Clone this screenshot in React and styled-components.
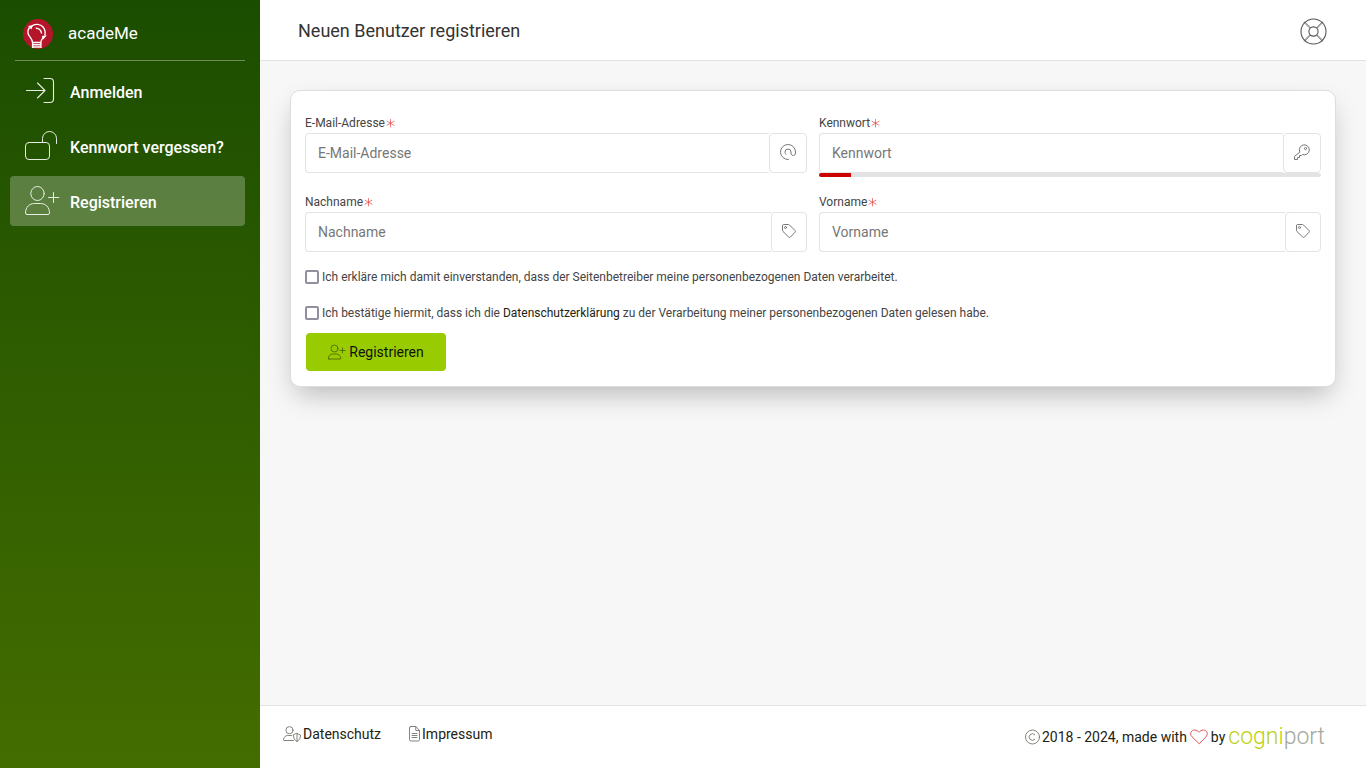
import React from "react";
import styled, { createGlobalStyle } from "styled-components";

const GlobalStyle = createGlobalStyle`
  * {
    box-sizing: border-box;
  }
  body {
    margin: 0;
    background: #f7f7f7;
    color: #444444;
    font-family: Roboto, "Liberation Sans", sans-serif;
    font-size: 14px;
    line-height: 20px;
  }
  button, input {
    font-family: inherit;
  }
  a {
    color: #222211;
    text-decoration: none;
  }
`;

const Page = styled.div`
  display: flex;
  min-height: 100vh;
`;

const Sidebar = styled.aside`
  flex: 0 0 260px;
  background: linear-gradient(#1b4d00, #446d00);
`;

const Brand = styled.a`
  display: flex;
  align-items: center;
  gap: 15px;
  height: 61px;
  margin: 0 15px 5px;
  padding: 8px 8px 0;
  border-bottom: 1px solid rgba(255, 255, 255, 0.35);
  color: #ffffff;
  font-size: 17px;
`;

const BrandName = styled.span`
  padding-bottom: 2px;
`;

const NavList = styled.nav`
  display: flex;
  flex-direction: column;
  gap: 5px;
  padding: 0 15px 0 10px;
`;

const NavItem = styled.a`
  display: flex;
  align-items: center;
  gap: 9px;
  height: 50px;
  padding: 4px 15px 0;
  border-radius: 4px;
  background: ${(props) =>
    props.$active ? "rgba(255, 255, 255, 0.25)" : "transparent"};
  color: #ffffff;
  font-size: 16px;
  font-weight: 500;
  white-space: nowrap;

  svg {
    margin-bottom: 4px;
  }
`;

const Main = styled.div`
  flex: 1;
  min-width: 0;
  display: flex;
  flex-direction: column;
`;

const Header = styled.header`
  display: flex;
  align-items: center;
  justify-content: space-between;
  height: 61px;
  padding: 2px 39px 0 38px;
  background: #ffffff;
  border-bottom: 1px solid #e3e3e3;
`;

const Title = styled.h1`
  margin: 0;
  color: #333333;
  font-size: 18px;
  font-weight: 400;
`;

const HelpButton = styled.button`
  display: flex;
  padding: 0;
  border: 0;
  background: none;
  color: #555555;
`;

const Content = styled.main`
  flex: 1;
  padding: 29px 30px;
`;

const Card = styled.form`
  padding: 22px 14px 15px;
  border: 1px solid #dddddd;
  border-radius: 10px;
  background: #ffffff;
  box-shadow: 0 12px 28px -6px rgba(0, 0, 0, 0.27);
`;

const Fields = styled.div`
  display: grid;
  grid-template-columns: 1fr 1fr;
  gap: 15px 12px;
`;

const Label = styled.label`
  display: flex;
  align-items: center;
  gap: 1px;
  font-size: 12px;
  line-height: 20px;
`;

const InputGroup = styled.div`
  display: flex;
  height: 40px;
`;

const TextInput = styled.input`
  flex: 1;
  min-width: 0;
  padding: 0 12px;
  border: 1px solid #e3e3e3;
  border-right: 0;
  border-radius: 4px 0 0 4px;
  background: #ffffff;
  color: #444444;
  font-size: 14px;
  outline: none;

  &::placeholder {
    color: #777777;
    opacity: 1;
  }
`;

const Addon = styled.span`
  display: flex;
  align-items: center;
  padding: 0 10px 2px;
  border: 1px solid #e3e3e3;
  border-radius: 4px;
  color: #777777;
`;

const Strength = styled.div`
  height: 4px;
  overflow: hidden;
  border-radius: 2px;
  background: #e3e3e3;
`;

const StrengthBar = styled.div`
  height: 100%;
  background: #cc0000;
`;

const Checks = styled.div`
  display: flex;
  flex-direction: column;
  gap: 16px;
  margin: 15px 0 10px;
`;

const CheckRow = styled.div`
  display: flex;
  align-items: center;
  gap: 3px;
  font-size: 12px;
`;

const Checkbox = styled.input`
  flex: none;
  appearance: none;
  width: 14px;
  height: 14px;
  margin: 0;
  border: 2px solid #8f8f9d;
  border-radius: 2px;
  background: #ffffff;

  &:checked {
    background: #99cc00;
  }
`;

const SubmitButton = styled.button`
  display: flex;
  align-items: center;
  justify-content: center;
  gap: 3px;
  min-width: 140px;
  height: 38px;
  margin-left: 1px;
  padding: 0 22px;
  border: 0;
  border-radius: 4px;
  background: #99cc00;
  color: #111111;
  font-size: 14px;
`;

const Footer = styled.footer`
  display: flex;
  align-items: center;
  justify-content: space-between;
  height: 63px;
  padding: 0 41px 0 23px;
  border-top: 1px solid #e3e3e3;
  background: #ffffff;
  color: #222211;
`;

const FooterLinks = styled.div`
  display: flex;
  gap: 28px;
  padding-bottom: 6px;
`;

const FooterLink = styled.a`
  display: flex;
  align-items: center;
  gap: 2px;
`;

const Copyright = styled.div`
  display: flex;
  align-items: center;
  gap: 3px;
`;

const Year = styled.span`
  display: flex;
  align-items: center;
  gap: 2px;
`;

const Cogniport = styled.a`
  color: #bdd010;
  font-size: 23px;
  font-weight: 300;
  line-height: 24px;
`;

const Port = styled.span`
  color: #a3a89a;
`;

const Icon = ({ w, h, stroke = 1, color = "currentColor", children }) => (
  <svg
    width={w}
    height={h}
    viewBox={`0 0 ${w} ${h}`}
    fill="none"
    stroke={color}
    strokeWidth={stroke}
    strokeLinecap="round"
    strokeLinejoin="round"
    aria-hidden="true"
  >
    {children}
  </svg>
);

const Logo = () => (
  <svg width="30" height="30" viewBox="0 0 30 30" fill="none" aria-hidden="true">
    <circle cx="15" cy="15" r="15" fill="#b5152b" />
    <g stroke="#ffffff" strokeWidth="1.4">
      <path d="M6.5 8.5C4.6 11 4.5 14 6 16.5C7.5 19 9.3 20.5 9.6 23.5H17.8C18 21 19.3 19.7 20.5 18" />
      <path d="M8.5 7.2C12 4.2 17.5 5 20.3 8.3C22.3 11 22.6 13.5 21.8 16.5" />
      <path d="M12.8 9.2C15.8 9 18.2 11.2 18.6 14.5" />
      <path d="M9.8 25.8H17.8M10 28H17.6" />
      <path d="M9.6 23.5V29M17.9 23.5V29" />
    </g>
    <path d="M5 7L10 6.3L8.3 10.5ZM18.8 17L23.8 16.3L20.3 20.5Z" fill="#ffffff" />
  </svg>
);

const LoginIcon = () => (
  <Icon w={36} h={30} stroke={1.1} color="#e6eee2">
    <path d="M1.5 14.5H20M12.5 7L20 14.5L12.5 22M19 2.5H25Q28.5 2.5 28.5 6V23Q28.5 26.5 25 26.5H19" />
  </Icon>
);

const UnlockIcon = () => (
  <Icon w={36} h={30} stroke={1} color="#e6eee2">
    <rect x="0.5" y="11.5" width="24" height="17" rx="3.5" />
    <path d="M17.5 11.5V7.5A7 7 0 0 1 31.5 7.500V12.5" />
  </Icon>
);

const UserPlusIcon = () => (
  <Icon w={36} h={30} stroke={1} color="#e6eee2">
    <ellipse cx="12.5" cy="7.5" rx="6.7" ry="7" />
    <path d="M2 28.5H23Q24.5 28.5 24.5 27C24.5 21 20.5 17.5 15.5 17.5H9.5C4.5 17.5 0.5 21 0.5 27Q0.5 28.5 2 28.5ZM28.5 6.5V16.5M23.5 11.5H33.8" />
  </Icon>
);

const UserPlusSmallIcon = () => (
  <Icon w={18} h={16} stroke={0.8} color="#476000">
    <circle cx="6.5" cy="4.5" r="3.5" />
    <path d="M1 15H12.2Q13 15 12.8 14C12.4 11.5 10.5 10 8.3 10H4.8C2.5 10 0.7 11.5 0.4 14Q0.3 15 1 15ZM14.5 4V9M12 6.5H17" />
  </Icon>
);

const LifeRingIcon = () => (
  <Icon w={27} h={27} stroke={1.1}>
    <circle cx="13.5" cy="13.5" r="12.5" />
    <circle cx="13.5" cy="13.5" r="4.600" />
    <path d="M4 4.5L10 10.3M5 4L10.5 9.8M23 4.5L17 10.3M22 4L16.5 9.8M4 22.5L10 16.7M5 23L10.5 17.2M23 22.5L17 16.7M22 23L16.5 17.2" strokeWidth="0.7" />
  </Icon>
);

const AtIcon = () => (
  <Icon w={16} h={16}>
    <path d="M8.5 15.5A7.5 7.5 0 1 1 15.5 8V9C15.5 12.3 11 12.3 11 9V8A3 3 0 0 0 5 8C5 9 5.3 9.7 6 10.3" />
  </Icon>
);

const KeyIcon = () => (
  <Icon w={16} h={16}>
    <path d="M5.7 7.8A5 5 0 1 1 8.5 10.5L7.5 11.5H5.5V13.5H3.5V15.5H0.5V12.8Z" />
    <circle cx="11.5" cy="4.5" r="1.1" />
  </Icon>
);

const TagIcon = () => (
  <Icon w={14} h={14}>
    <path d="M0.5 1.5Q0.5 0.5 1.5 0.5H6.3Q7 0.5 7.5 1L13 6.5Q13.8 7.3 13 8.2L8.5 13Q7.5 13.8 6.7 13L1 7.5Q0.5 7 0.5 6.3Z" />
    <circle cx="3.5" cy="3.5" r="1" />
  </Icon>
);

const UserShieldIcon = () => (
  <Icon w={18} h={16} stroke={0.9} color="#77776c">
    <circle cx="6.5" cy="4.2" r="3.6" />
    <path d="M10.5 14.5H1Q0.3 14.5 0.5 13.5C0.9 11 2.5 9.5 4.8 9.5H8.8M14 7.5L17.5 9C17.5 12 16.5 14.2 14 15.5C11.5 14.2 10.5 12 10.5 9ZM14 7.5V15.5" />
  </Icon>
);

const FileIcon = () => (
  <Icon w={11} h={16} stroke={0.9} color="#77776c">
    <path d="M1.5 0.5H7L10.5 4.5V13.5Q10.5 15 9 15H2Q0.5 15 0.5 13.5V2Q0.5 0.5 1.5 0.5ZM6.8 0.8V4.5H10.3M3 7.5H8M3 9.5H8M3 11.5H8" />
  </Icon>
);

const CopyrightIcon = () => (
  <Icon w={15} h={16} stroke={0.9} color="#77776c">
    <circle cx="7.5" cy="8" r="7" />
    <path d="M9.8 10.3A3.3 3.3 0 1 1 9.8 5.7" />
  </Icon>
);

const HeartIcon = () => (
  <Icon w={18} h={16} stroke={0.9} color="#dd4444">
    <path d="M9 14.5L2 7.8C-1 4.5 1.5 1 4.5 1C6.5 1 8 2 9 3.3C10 2 11.5 1 13.5 1C16.5 1 19 4.5 16 7.8Z" />
  </Icon>
);

const RequiredIcon = () => (
  <Icon w={9} h={10} stroke={0.7} color="#e04444">
    <path d="M4.5 1.5V9M1 3.3L8 7.2M8 3.3L1 7.2" />
  </Icon>
);

const navItems = [
  { text: "Anmelden", icon: <LoginIcon /> },
  { text: "Kennwort vergessen?", icon: <UnlockIcon /> },
  { text: "Registrieren", icon: <UserPlusIcon />, active: true }
];

const fields = [
  { id: "email", text: "E-Mail-Adresse", type: "email", icon: <AtIcon /> },
  { id: "password", text: "Kennwort", type: "password", icon: <KeyIcon />, strength: 6.4 },
  { id: "lastname", text: "Nachname", type: "text", icon: <TagIcon /> },
  { id: "firstname", text: "Vorname", type: "text", icon: <TagIcon /> }
];

const Field = ({ field }) => (
  <div>
    <Label htmlFor={field.id}>
      {field.text}
      <RequiredIcon />
    </Label>
    <InputGroup>
      <TextInput id={field.id} type={field.type} placeholder={field.text} />
      <Addon>{field.icon}</Addon>
    </InputGroup>
    {field.strength && (
      <Strength>
        <StrengthBar style={{ width: `${field.strength}%` }} />
      </Strength>
    )}
  </div>
);

function App() {
  return (
    <Page>
      <GlobalStyle />
      <Sidebar>
        <Brand href="#">
          <Logo />
          <BrandName>acadeMe</BrandName>
        </Brand>
        <NavList>
          {navItems.map((item) => (
            <NavItem key={item.text} href="#" $active={item.active}>
              {item.icon}
              {item.text}
            </NavItem>
          ))}
        </NavList>
      </Sidebar>
      <Main>
        <Header>
          <Title>Neuen Benutzer registrieren</Title>
          <HelpButton type="button" aria-label="Hilfe">
            <LifeRingIcon />
          </HelpButton>
        </Header>
        <Content>
          <Card onSubmit={(e) => e.preventDefault()}>
            <Fields>
              {fields.map((field) => (
                <Field key={field.id} field={field} />
              ))}
            </Fields>
            <Checks>
              <CheckRow>
                <Checkbox type="checkbox" id="consent" />
                <label htmlFor="consent">
                  Ich erkläre mich damit einverstanden, dass der Seitenbetreiber
                  meine personenbezogenen Daten verarbeitet.
                </label>
              </CheckRow>
              <CheckRow>
                <Checkbox type="checkbox" id="privacy" />
                <label htmlFor="privacy">
                  Ich bestätige hiermit, dass ich die{" "}
                  <a href="#">Datenschutzerklärung</a> zu der Verarbeitung meiner
                  personenbezogenen Daten gelesen habe.
                </label>
              </CheckRow>
            </Checks>
            <SubmitButton type="submit">
              <UserPlusSmallIcon />
              Registrieren
            </SubmitButton>
          </Card>
        </Content>
        <Footer>
          <FooterLinks>
            <FooterLink href="#">
              <UserShieldIcon />
              Datenschutz
            </FooterLink>
            <FooterLink href="#">
              <FileIcon />
              Impressum
            </FooterLink>
          </FooterLinks>
          <Copyright>
            <Year>
              <CopyrightIcon />
              2018 - 2024, made with
            </Year>
            <HeartIcon />
            by
            <Cogniport href="#">
              cogni<Port>port</Port>
            </Cogniport>
          </Copyright>
        </Footer>
      </Main>
    </Page>
  );
}

export default App;
